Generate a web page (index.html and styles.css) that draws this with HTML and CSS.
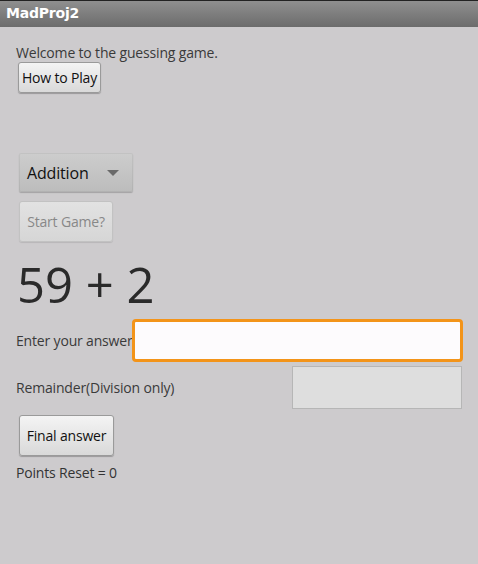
FILE: index.html
```html
<!DOCTYPE html>
<html>
<head>
<meta charset="utf-8">
<link rel="stylesheet" href="styles.css">
</head>
<body>
<div class="titlebar">MadProj2</div>
<main class="content">
  <p class="welcome">Welcome to the guessing game.</p>
  <button class="btn btn-how">How to Play</button>
  <div class="spinner"><span>Addition</span><span class="caret"></span></div>
  <button class="btn btn-start" disabled>Start Game?</button>
  <div class="problem">59 + 2</div>
  <div class="row row-answer">
    <span class="label">Enter your answer</span>
    <div class="field field-focus"></div>
  </div>
  <div class="row row-rem">
    <span class="label">Remainder(Division only)</span>
    <div class="field field-disabled"></div>
  </div>
  <button class="btn btn-final">Final answer</button>
  <p class="points">Points Reset = 0</p>
</main>
</body>
</html>
```
FILE: styles.css
```css
html, body {
  margin: 0;
  padding: 0;
  height: 100%;
}
body {
  background: #cdcbcd;
  font-family: "Open Sans", "DejaVu Sans", sans-serif;
  color: #333;
  width: 478px;
  height: 564px;
  overflow: hidden;
}
.titlebar {
  height: 26px;
  border-top: 1px solid #222;
  background: linear-gradient(#8f8f8f, #6c6c6c);
  color: #fff;
  font-weight: bold;
  font-size: 14px;
  line-height: 25px;
  padding-left: 6px;
  font-family: "DejaVu Sans", sans-serif;
  letter-spacing: -0.2px;
}
.content {
  display: flex;
  flex-direction: column;
  align-items: flex-start;
  padding: 0 16px;
  letter-spacing: -0.17px;
}
.welcome {
  margin: 16px 0 0 0;
  font-size: 14px;
  line-height: 19px;
  color: #3a3a3a;
}
.btn {
  font-family: "Open Sans", "DejaVu Sans", sans-serif;
  font-size: 14px;
  letter-spacing: -0.17px;
  color: #111;
  border: 1px solid #9a9a9a;
  border-radius: 3px;
  background: linear-gradient(#f4f4f4, #d9d9d9);
  box-shadow: 0 1px 1px rgba(0,0,0,0.25);
  padding: 0;
}
.btn-how {
  margin: 0 0 0 2px;
  width: 83px;
  height: 31px;
}
.spinner {
  margin: 60px 0 0 3px;
  width: 114px;
  height: 39px;
  box-sizing: border-box;
  border-radius: 2px;
  background: linear-gradient(#cdcdcd, #bcbcbc);
  box-shadow: 0 1px 1px rgba(0,0,0,0.2), inset 0 0 0 1px rgba(0,0,0,0.05);
  display: flex;
  align-items: center;
  justify-content: space-between;
  padding: 0 14px 0 8px;
  font-size: 16px;
  color: #111;
}
.caret {
  width: 0;
  height: 0;
  border-left: 6px solid transparent;
  border-right: 6px solid transparent;
  border-top: 6px solid #6a6a6a;
}
.btn-start {
  margin: 9px 0 0 3px;
  width: 94px;
  height: 41px;
  background: linear-gradient(#e2e2e2, #d6d6d6);
  border-color: #c2c2c2;
  color: #888;
  box-shadow: 0 1px 1px rgba(0,0,0,0.1);
}
.problem {
  margin: 13px 0 0 1px;
  font-size: 49px;
  line-height: 58px;
  letter-spacing: 0;
  color: #2a2a2a;
}
.row {
  display: flex;
  align-items: center;
  width: 100%;
}
.label {
  font-size: 14px;
  color: #3a3a3a;
}
.row-answer {
  margin-top: 6px;
}
.field-focus {
  margin-left: -1px;
  flex: 1;
  height: 37px;
  border: 3px solid #f39419;
  border-radius: 4px;
  background: #fdfbfd;
  margin-right: -1px;
}
.row-rem {
  margin-top: 4px;
  justify-content: space-between;
}
.field-disabled {
  width: 168px;
  height: 41px;
  border: 1px solid #b6b6b6;
  background: #dedede;
  margin-right: 0;
}
.btn-final {
  margin: 6px 0 0 3px;
  width: 95px;
  height: 41px;
}
.points {
  margin: 7px 0 0 0;
  font-size: 14px;
  color: #333;
}
```
